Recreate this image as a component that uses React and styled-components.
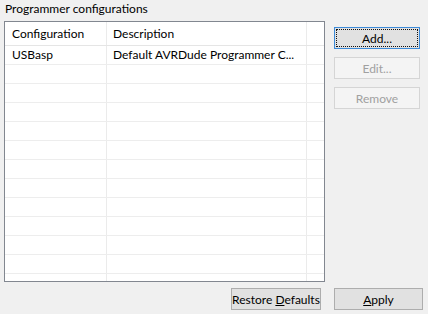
import React from 'react';
import styled, { createGlobalStyle } from 'styled-components';

const Global = createGlobalStyle`
  html, body { margin: 0; padding: 0; background: #f0f0f0; }
  body { font-family: Lato, "Liberation Sans", sans-serif; font-size: 12px; color: #000; }
`;

const Page = styled.div`
  width: 428px;
  height: 314px;
  box-sizing: border-box;
  padding: 1px 0 0 4px;
  display: flex;
  flex-direction: column;
`;

const Caption = styled.div`
  height: 19px;
  line-height: 15px;
  padding-left: 1px;
  margin-bottom: 1px;
`;

const Body = styled.div`
  display: flex;
  gap: 9px;
  align-items: flex-start;
`;

const Table = styled.div`
  width: 321px;
  height: 261px;
  box-sizing: border-box;
  border: 1px solid #828790;
  background: #fff;
  overflow: hidden;
`;

const Row = styled.div`
  display: flex;
  height: ${({ head }) => (head ? 24 : 19)}px;
  box-sizing: border-box;
  border-bottom: 1px solid ${({ head }) => (head ? '#e5e5e5' : '#ededed')};
`;

const Cell = styled.div`
  width: ${({ w }) => w}px;
  flex: ${({ w }) => (w ? 'none' : 1)};
  box-sizing: border-box;
  padding-left: ${({ first }) => (first ? 7 : 6)}px;
  border-right: ${({ last }) => (last ? 'none' : '1px solid #ebebeb')};
  line-height: ${({ head }) => (head ? 23 : 18)}px;
  white-space: nowrap;
  overflow: hidden;
`;

const Side = styled.div`
  display: flex;
  flex-direction: column;
  gap: 8px;
  padding-top: 6px;
`;

const Button = styled.button`
  width: ${({ w }) => w || 86}px;
  height: 22px;
  box-sizing: border-box;
  margin: 0;
  padding: 0;
  font: inherit;
  background: ${({ disabled }) => (disabled ? '#f4f4f4' : '#e1e1e1')};
  color: ${({ disabled }) => (disabled ? '#a0a0a0' : '#000')};
  border: 1px solid ${({ focus, disabled }) => (focus ? '#3c8ad8' : disabled ? '#d5d5d5' : '#adadad')};
  position: relative;
  cursor: default;
  & u { text-decoration: underline; }
`;

const FocusRing = styled.span`
  position: absolute;
  inset: 1px;
  border: 1px dotted #111;
  pointer-events: none;
`;

const Footer = styled.div`
  display: flex;
  justify-content: flex-end;
  gap: 13px;
  padding: 6px 5px 0 0;
`;

const rows = Array.from({ length: 12 });

export default function App() {
  return (
    <>
      <Global />
      <Page>
        <Caption>Programmer configurations</Caption>
        <Body>
          <Table>
            <Row head>
              <Cell head first w={102}>Configuration</Cell>
              <Cell head w={200}>Description</Cell>
              <Cell head last />
            </Row>
            <Row>
              <Cell first w={102}>USBasp</Cell>
              <Cell w={200}>Default AVRDude Programmer C...</Cell>
              <Cell last />
            </Row>
            {rows.map((_, i) => (
              <Row key={i}>
                <Cell first w={102} />
                <Cell w={200} />
                <Cell last />
              </Row>
            ))}
          </Table>
          <Side>
            <Button focus>Add...<FocusRing /></Button>
            <Button disabled>Edit...</Button>
            <Button disabled>Remove</Button>
          </Side>
        </Body>
        <Footer>
          <Button w={90}>Restore <u>D</u>efaults</Button>
          <Button w={89}><u>A</u>pply</Button>
        </Footer>
      </Page>
    </>
  );
}
